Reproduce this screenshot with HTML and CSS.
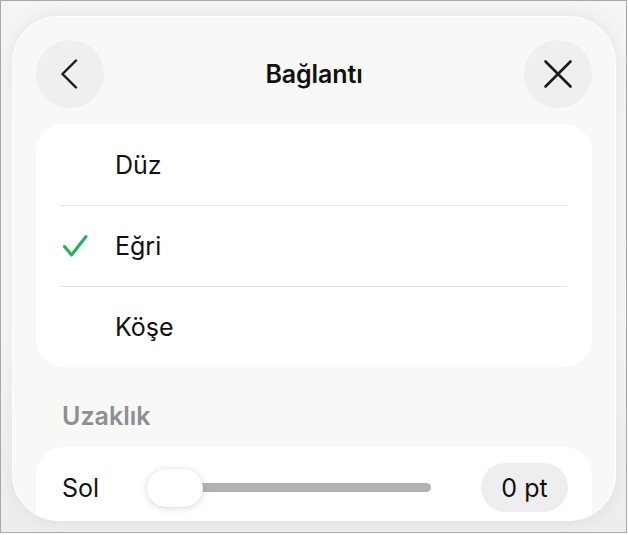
FILE: index.html
```html
<!DOCTYPE html>
<html lang="tr">
<head>
<meta charset="utf-8">
<title>Bağlantı</title>
<link rel="stylesheet" href="styles.css">
</head>
<body>
<div class="frame">
  <div class="panel">
    <header class="header">
      <button class="round-btn" aria-label="Geri">
        <svg width="20" height="30" viewBox="0 0 20 30"><path d="M16 1.5 L2.5 15 L16 28.5" fill="none" stroke="#1a1a1a" stroke-width="2.4" stroke-linecap="round" stroke-linejoin="round"/></svg>
      </button>
      <h1 class="title">Bağlantı</h1>
      <button class="round-btn" aria-label="Kapat">
        <svg width="30" height="30" viewBox="0 0 30 30"><path d="M2.5 2.5 L27.5 27.5 M27.5 2.5 L2.5 27.5" fill="none" stroke="#1a1a1a" stroke-width="2.6" stroke-linecap="round"/></svg>
      </button>
    </header>

    <ul class="options">
      <li class="option"><span class="check"></span><span class="option-label">Düz</span></li>
      <li class="option selected">
        <span class="check">
          <svg width="26" height="24" viewBox="0 0 26 24"><path d="M2.5 12.5 L9.5 21 L24 2.5" fill="none" stroke="#20b35a" stroke-width="3" stroke-linecap="round" stroke-linejoin="round"/></svg>
        </span>
        <span class="option-label">Eğri</span>
      </li>
      <li class="option"><span class="check"></span><span class="option-label">Köşe</span></li>
    </ul>

    <h2 class="section-label">Uzaklık</h2>

    <div class="slider-card">
      <div class="slider-row">
        <span class="slider-name">Sol</span>
        <div class="slider">
          <div class="track"></div>
          <div class="thumb"></div>
        </div>
        <span class="value-pill">0 pt</span>
      </div>
    </div>
  </div>
</div>
</body>
</html>
```

FILE: styles.css
```css
* { box-sizing: border-box; }

html, body {
  margin: 0;
  padding: 0;
  background: #ffffff;
  font-family: Inter, "Noto Sans", "Liberation Sans", sans-serif;
  color: #111111;
}

.frame {
  width: 627px;
  height: 533px;
  border: 1px solid #a9a9a9;
  background: linear-gradient(180deg, #f4f4f4 0%, #f7f7f7 60%, #ededed 100%);
  padding: 15px 0 0 11px;
}

.panel {
  width: 604px;
  height: 505px;
  border: 1.5px solid #ffffff;
  border-radius: 46px;
  background: #f8f8f7;
  box-shadow: 0 0 18px rgba(0, 0, 0, 0.07);
  overflow: hidden;
  padding: 23px 23px 0 23px;
}

/* header: back, title, close */
.header {
  display: flex;
  align-items: center;
  justify-content: space-between;
  height: 68px;
}

.round-btn {
  width: 68px;
  height: 68px;
  border: none;
  border-radius: 50%;
  background: #efefef;
  padding: 0;
  display: flex;
  align-items: center;
  justify-content: center;
}

.title {
  margin: 0;
  font-size: 25px;
  font-weight: 600;
  letter-spacing: -0.1px;
}

/* option list */
.options {
  list-style: none;
  margin: 16px 0 0 0;
  padding: 0 25px;
  background: #ffffff;
  border-radius: 28px;
}

.option {
  display: flex;
  align-items: center;
  height: 81px;
}

.option + .option {
  border-top: 1.5px solid #e4e4e4;
}

.check {
  width: 54px;
  display: flex;
  align-items: center;
  padding-left: 1px;
}

.option-label {
  font-size: 25px;
  font-weight: 400;
}

.section-label {
  margin: 34px 0 0 26px;
  font-size: 25px;
  line-height: 30px;
  font-weight: 600;
  color: #8e8e93;
}

/* slider card */
.slider-card {
  margin-top: 16px;
  height: 100px;
  background: #ffffff;
  border-radius: 28px;
  padding: 16px 24px 0 26px;
}

.slider-row {
  display: flex;
  align-items: center;
  height: 49px;
}

.slider-name {
  width: 85px;
  font-size: 25px;
}

.slider {
  position: relative;
  width: 284px;
  height: 38px;
  display: flex;
  align-items: center;
}

.track {
  margin-left: 3px;
  flex: 1;
  height: 9px;
  border-radius: 5px;
  background: #b2b2b2;
}

.thumb {
  position: absolute;
  left: 0;
  top: 0;
  width: 56px;
  height: 38px;
  border-radius: 19px;
  background: #ffffff;
  box-shadow: 0 1px 7px rgba(0, 0, 0, 0.16), 0 0 1px rgba(0, 0, 0, 0.08);
}

.value-pill {
  margin-left: auto;
  width: 87px;
  height: 49px;
  border-radius: 25px;
  background: #eeeef0;
  display: flex;
  align-items: center;
  justify-content: center;
  font-size: 25px;
}
```
